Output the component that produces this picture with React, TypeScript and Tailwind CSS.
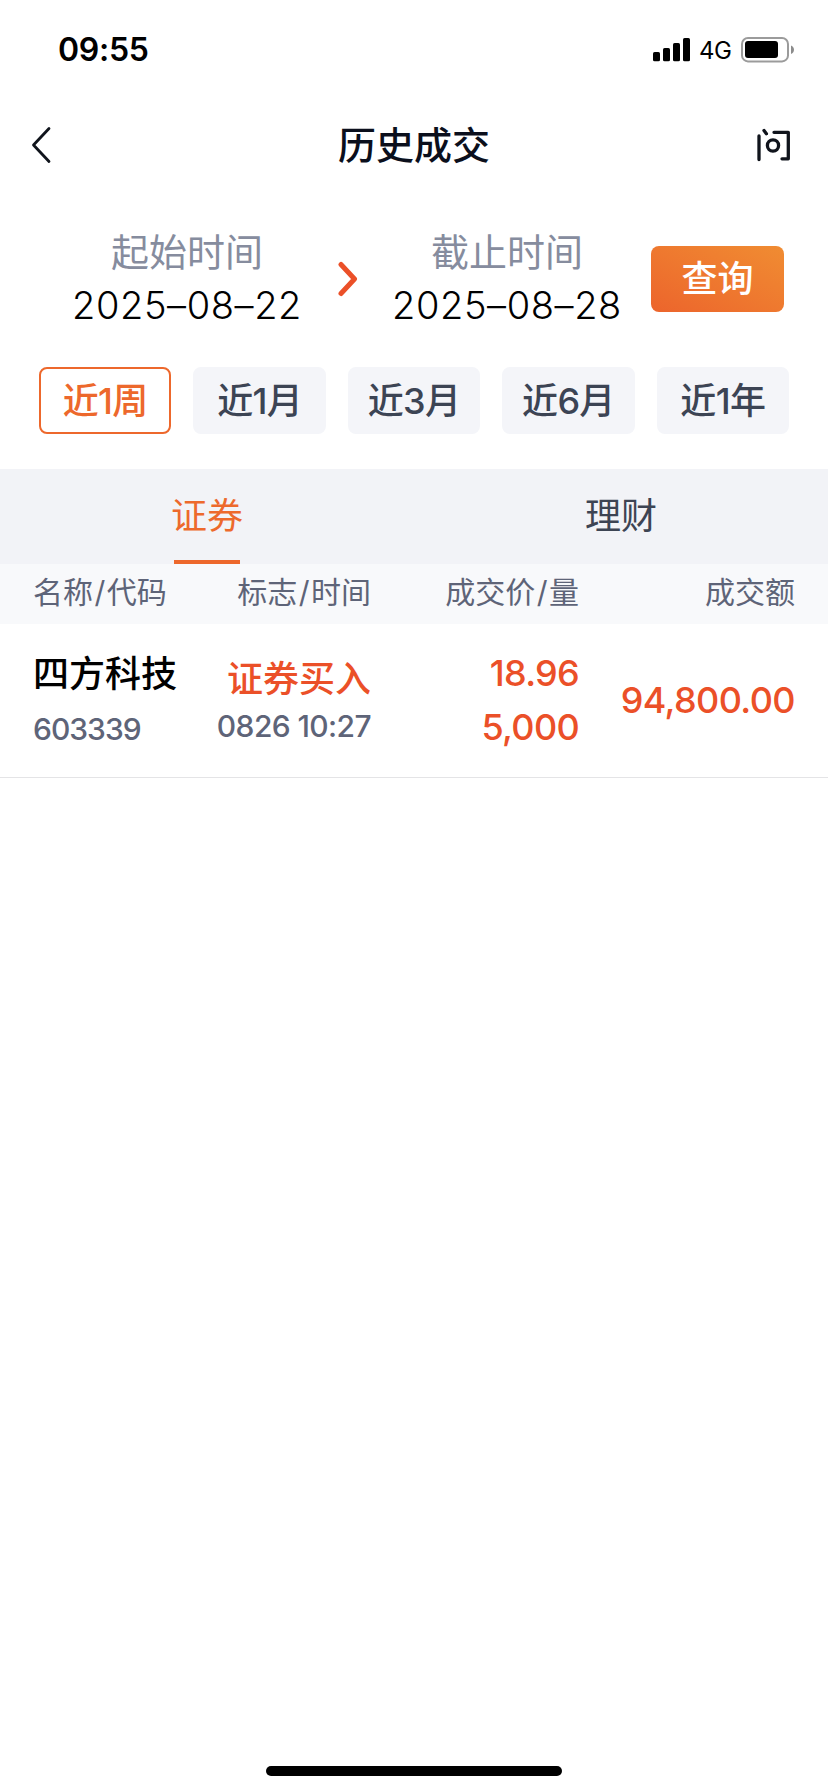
import React from 'react';

const ranges = ['近1周', '近1月', '近3月', '近6月', '近1年'];

const trades = [
  {
    name: '四方科技',
    code: '603339',
    side: '证券买入',
    time: '0826 10:27',
    price: '18.96',
    volume: '5,000',
    amount: '94,800.00',
  },
];

// STATUS BAR
const StatusBar = () => (
  <div className="flex h-[99px] items-start justify-between pl-[58px] pr-[33px]">
    <span className="mt-[30px] text-[32px] leading-[40px] font-semibold tracking-[-0.3px] text-black">09:55</span>
    <div className="mt-[37px] flex h-[26px] items-start">
      <svg className="mt-px mr-[8px]" width="38" height="24" viewBox="0 0 38 24">
        <rect x="0" y="14" width="7" height="9.3" rx="1.6" />
        <rect x="10" y="10" width="7" height="13.3" rx="1.6" />
        <rect x="20" y="5" width="7" height="18.3" rx="1.6" />
        <rect x="30" y="0" width="7" height="23.3" rx="1.6" />
      </svg>
      <span className="w-[42px] text-[24px] leading-[28px] tracking-[-0.5px] text-black">4G</span>
      <svg width="54" height="26" viewBox="0 0 54 26">
        <rect x="1" y="1" width="46" height="23.4" rx="6" fill="none" stroke="#9b9b9b" strokeWidth="2" />
        <rect x="4" y="4" width="33" height="17" rx="3" />
        <path d="M50 8.500c4 1.500 4 7 0 8.500z" fill="#8c8c8c" />
      </svg>
    </div>
  </div>
);

const NavBar = () => (
  <header className="flex h-[91px] items-center justify-between pr-[34px] pl-[30px]">
    <svg className="mr-[18px]" width="24" height="38" viewBox="0 0 24 38" fill="none" stroke="#10141c" strokeWidth="2.8" strokeLinecap="round" strokeLinejoin="round">
      <path d="M19 2.500L3.500 19L19 35.500" />
    </svg>
    <h1 className="text-[38px] leading-[50px] font-medium text-[#0b0f1c]">历史成交</h1>
    <svg width="38" height="38" viewBox="0 0 38 38" fill="none" stroke="#10141c" strokeWidth="3.3" strokeLinecap="round" strokeLinejoin="round">
      <path d="M3 10v23.500M8 4.600l2.400 3.200M18 6.300h14.300v26.500h-6.300" />
      <circle cx="17" cy="19.500" r="5.600" />
    </svg>
  </header>
);

const DateField = ({ label, value }: { label: string; value: string }) => (
  <div className="flex w-[240px] flex-col items-center">
    <span className="text-[38px] leading-[53px] text-[#868c9e]">{label}</span>
    <span className="text-[38px] leading-[53px] font-light tracking-[0.6px] whitespace-nowrap text-black">{value}</span>
  </div>
);

// DATE FILTER
const Filter = () => (
  <section className="h-[279px] px-[39px]">
    <div className="flex h-[177px] items-start pt-[36px] pl-[28px]">
      <DateField label="起始时间" value="2025–08–22" />
      <div className="mt-[35px] flex w-[80px] justify-center pl-[2px]">
        <svg width="22" height="36" viewBox="0 0 22 36" fill="none" stroke="#eb5028" strokeWidth="5" strokeLinecap="round" strokeLinejoin="round">
          <path d="M4 3.500L17.500 18L4 32.500" />
        </svg>
      </div>
      <DateField label="截止时间" value="2025–08–28" />
      <button className="mt-[20px] ml-[24px] h-[66px] w-[133px] shrink-0 rounded-lg bg-gradient-to-tr from-[#ec642c] to-[#f08c32] text-[36px] leading-[66px] font-medium text-white">
        查询
      </button>
    </div>
    <div className="grid grid-cols-5 gap-[22px]">
      {ranges.map((range, index) => (
        <button
          key={range}
          className={`h-[67px] rounded-lg pt-px text-[36px] leading-[62px] font-medium tracking-[-0.7px] whitespace-nowrap ${index === 0 ? 'border-2 border-[#ed682c] text-[#ed682c]' : 'border-2 border-[#f4f5f9] bg-[#f4f5f9] text-[#3c4454]'}`}
        >
          {range}
        </button>
      ))}
    </div>
  </section>
);

const Tabs = () => (
  <div className="grid h-[95px] grid-cols-2 bg-[#f2f3f7] text-center text-[36px] leading-[95px]">
    <div className="flex flex-col items-center text-[#ed692c]">
      <span className="h-[91px]">证券</span>
      <span className="h-[4px] w-[66px] bg-[#ed682c]" />
    </div>
    <div className="text-[#3d4453]">理财</div>
  </div>
);

const ColumnTitle = ({ first, second }: { first: string; second: string }) => (
  <span>
    {first}
    <span className="px-[1.5px]">/</span>
    {second}
  </span>
);

// TRADES TABLE
const TradeTable = () => (
  <section>
    <div className="grid h-[60px] grid-cols-[150px_188px_208px_1fr] bg-[#f8f9fb] pr-[33px] pl-[33px] text-right text-[30px] leading-[57px] whitespace-nowrap text-[#5e6478]">
      <div className="text-left">
        <ColumnTitle first="名称" second="代码" />
      </div>
      <ColumnTitle first="标志" second="时间" />
      <ColumnTitle first="成交价" second="量" />
      <span>成交额</span>
    </div>
    {trades.map((trade) => (
      <div
        key={trade.code}
        className="grid h-[154px] grid-cols-[150px_188px_208px_1fr] border-b border-[#e4e4e6] pr-[33px] pl-[33px] text-right text-[36px] font-medium whitespace-nowrap text-[#eb5028]"
      >
        <div className="pt-[24px] text-left">
          <p className="leading-[52px] text-black">{trade.name}</p>
          <p className="mt-[9px] text-[30px] leading-[40px] tracking-[-1px] text-[#5e6478]">{trade.code}</p>
        </div>
        <div className="pt-[29px]">
          <p className="leading-[52px]">{trade.side}</p>
          <p className="mt-px text-[30px] leading-[40px] tracking-[-0.6px] text-[#5e6478]">{trade.time}</p>
        </div>
        <div className="pt-[22px] tracking-[-0.7px]">
          <p className="leading-[54px]">{trade.price}</p>
          <p className="leading-[54px]">{trade.volume}</p>
        </div>
        <div className="pt-[49px] leading-[54px] tracking-[-0.6px]">{trade.amount}</div>
      </div>
    ))}
  </section>
);

const App: React.FC = () => {
  return (
    <div className="flex h-[1792px] w-[828px] flex-col overflow-hidden bg-white font-['Inter','Noto_Sans_CJK_SC',sans-serif]">
      <StatusBar />
      <NavBar />
      <Filter />
      <Tabs />
      <TradeTable />
      <div className="mx-auto mt-auto mb-[16px] h-[10px] w-[296px] rounded-full bg-black" />
    </div>
  );
};

export default App;
